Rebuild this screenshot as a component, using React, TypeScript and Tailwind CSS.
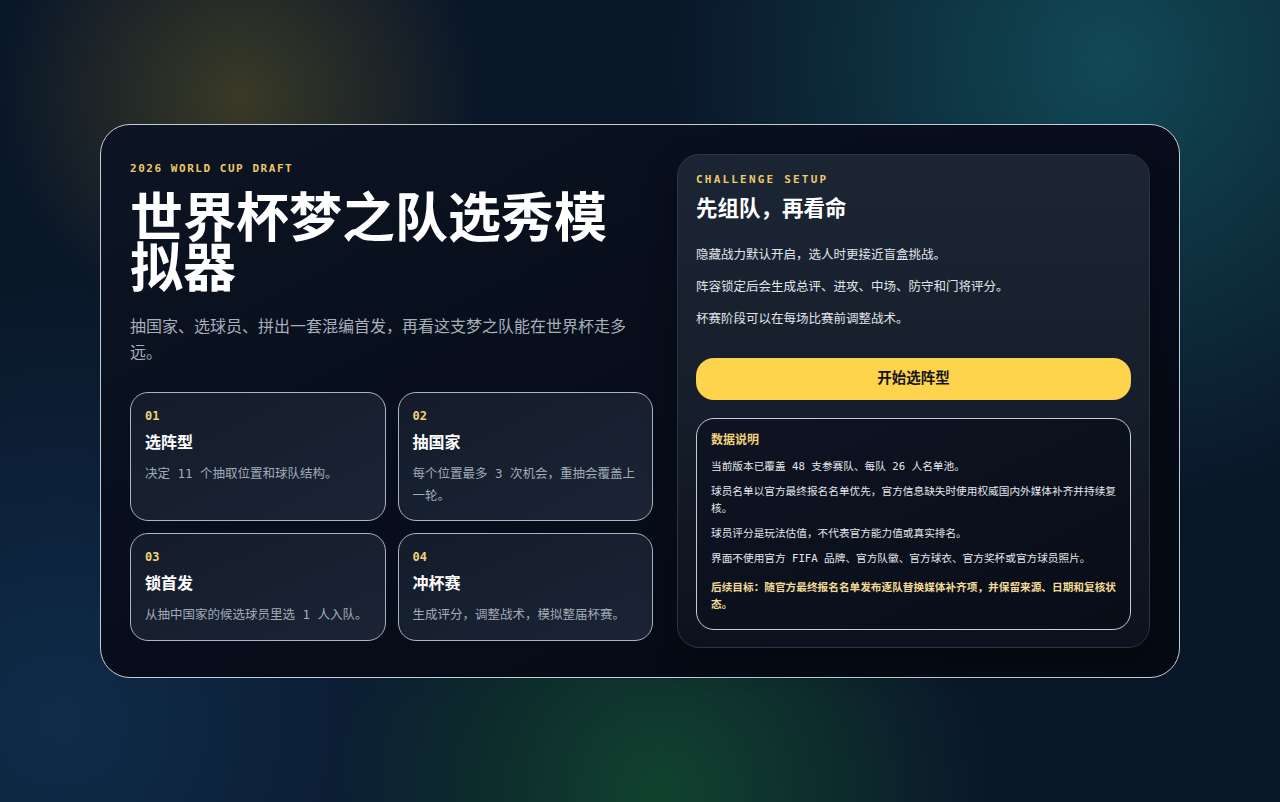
const mono = "font-['DejaVu_Sans_Mono','Noto_Sans_CJK_SC',monospace]";

const steps = [
  { no: "01", title: "选阵型", desc: "决定 11 个抽取位置和球队结构。" },
  { no: "02", title: "抽国家", desc: "每个位置最多 3 次机会，重抽会覆盖上一轮。" },
  { no: "03", title: "锁首发", desc: "从抽中国家的候选球员里选 1 人入队。" },
  { no: "04", title: "冲杯赛", desc: "生成评分，调整战术，模拟整届杯赛。" },
];

const notes = [
  "当前版本已覆盖 48 支参赛队、每队 26 人名单池。",
  "球员名单以官方最终报名名单优先，官方信息缺失时使用权威国内外媒体补齐并持续复核。",
  "球员评分是玩法估值，不代表官方能力值或真实排名。",
  "界面不使用官方 FIFA 品牌、官方队徽、官方球衣、官方奖杯或官方球员照片。",
];

function StepCard({ no, title, desc }: { no: string; title: string; desc: string }) {
  return (
    <div className="rounded-[18px] border border-[#aab3bf] bg-gradient-to-br from-[#141c2b] to-[#1a2434] px-[14px] pt-[15px] pb-[14px]">
      <div className="text-[12px] leading-[16px] font-bold text-[#f2d27a]">{no}</div>
      <div className="mt-[7px] text-[16px] leading-[24px] font-bold text-white">{title}</div>
      <p className="mt-[8px] text-[12.5px] leading-[21.5px] text-[#a2abb8]">{desc}</p>
    </div>
  );
}

export default function App() {
  return (
    <div
      className={`${mono} min-h-[802px] w-full flex items-center justify-center bg-[#0a1729] bg-[radial-gradient(circle_at_240px_95px,rgba(105,92,35,0.5),transparent_240px),radial-gradient(circle_at_1110px_60px,rgba(20,92,102,0.72),transparent_440px),radial-gradient(circle_at_660px_790px,rgba(20,85,50,0.7),transparent_330px),radial-gradient(circle_at_60px_720px,rgba(18,55,92,0.65),transparent_440px)]`}
    >
      <div className="w-[1080px] rounded-[30px] border border-[#c4ccd6] bg-gradient-to-br from-[#0d1423] via-[#070d1a] to-[#050a14] p-[29px]">
        <div className="grid grid-cols-[523px_473px] gap-6 items-start">
          {/* left */}
          <div className="pt-[7px]">
            <div className="text-[11px] leading-[16px] font-bold tracking-[0.14em] text-[#ecc96a]">
              2026 WORLD CUP DRAFT
            </div>
            <h1 className="mt-[12px] text-[53px] leading-[50px] font-bold text-white font-['Noto_Sans_CJK_SC',sans-serif]">
              世界杯梦之队选秀模拟器
            </h1>
            <p className="mt-[24px] text-[16px] leading-[25.6px] text-[#a7afbb] font-['Noto_Sans_CJK_SC',sans-serif]">
              抽国家、选球员、拼出一套混编首发，再看这支梦之队能在世界杯走多远。
            </p>
            <div className="mt-[28px] grid grid-cols-2 gap-3">
              {steps.map((s) => (
                <StepCard key={s.no} {...s} />
              ))}
            </div>
          </div>

          {/* right */}
          <div className="rounded-[22px] border border-[#2c3544] bg-gradient-to-b from-[#1c2534] via-[#161e2b] to-[#0c121d] px-[18px] pt-[17px] pb-[17px] shadow-[0_10px_30px_rgba(0,0,0,0.35)]">
            <div className="text-[11px] leading-[16px] font-bold tracking-[0.2em] text-[#ecc96a]">
              CHALLENGE SETUP
            </div>
            <h2 className="mt-[5px] text-[21.5px] leading-[32px] font-bold text-white">先组队，再看命</h2>
            <div className="mt-[20px] flex flex-col gap-3 text-[12.5px] leading-[20px] text-[#e1e5eb]">
              <p>隐藏战力默认开启，选人时更接近盲盒挑战。</p>
              <p>阵容锁定后会生成总评、进攻、中场、防守和门将评分。</p>
              <p>杯赛阶段可以在每场比赛前调整战术。</p>
            </div>
            <button className="mt-[29px] w-full h-[42px] rounded-[18px] bg-[#ffd44d] text-[14.5px] font-bold text-[#14161c]">
              开始选阵型
            </button>
            <div className="mt-[18px] rounded-[18px] border border-[#c4ccd6] bg-gradient-to-br from-[#0e1422] to-[#080d18] px-[14px] pt-[13px] pb-[16px]">
              <div className="text-[12px] leading-[16px] font-bold text-[#f2d27a]">数据说明</div>
              <div className="mt-[10px] flex flex-col gap-2 text-[10.67px] leading-[17px] text-[#e4e7ec]">
                {notes.map((n) => (
                  <p key={n}>{n}</p>
                ))}
                <p className="mt-[4px] font-bold text-[#f3da93]">
                  后续目标：随官方最终报名名单发布逐队替换媒体补齐项，并保留来源、日期和复核状态。
                </p>
              </div>
            </div>
          </div>
        </div>
      </div>
    </div>
  );
}
